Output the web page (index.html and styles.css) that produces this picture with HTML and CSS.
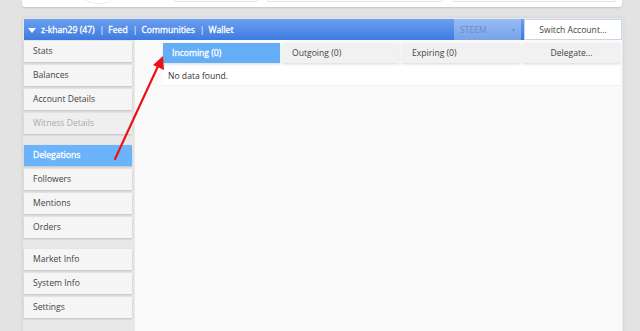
FILE: index.html
```html
<!DOCTYPE html>
<html lang="en">
<head>
    <meta charset="UTF-8">
    <meta name="viewport" content="width=device-width, initial-scale=1.0">
    <link rel="stylesheet" href="styles.css">
    <title>Delegations</title>
</head>
<body>
    <div class="topcard">
        <div class="avatar"></div>
        <div class="stub s1"></div>
        <div class="stub s2"></div>
        <div class="stub s3"></div>
    </div>

    <div class="panel">
        <div class="head">
            <div class="nav">
                <span class="caret"></span>
                <span>z-khan29 (47)</span><span class="sep">|</span>
                <span>Feed</span><span class="sep">|</span>
                <span>Communities</span><span class="sep">|</span>
                <span>Wallet</span>
            </div>
            <div class="chain">STEEM <span class="dot">&#9662;</span></div>
            <button class="switch">Switch Account...</button>
        </div>

        <div class="main">
            <ul class="menu">
                <li>Stats</li>
                <li>Balances</li>
                <li>Account Details</li>
                <li class="off">Witness Details</li>
                <li class="on gap">Delegations</li>
                <li>Followers</li>
                <li>Mentions</li>
                <li>Orders</li>
                <li class="gap">Market Info</li>
                <li>System Info</li>
                <li>Settings</li>
            </ul>
            <div class="content">
                <div class="tabs">
                    <div class="tab on t1">Incoming (0)</div>
                    <div class="tab t2">Outgoing (0)</div>
                    <div class="tab t3">Expiring (0)</div>
                    <div class="tab t4">Delegate...</div>
                </div>
                <div class="empty">No data found.</div>
            </div>
        </div>
    </div>

    <svg class="arrow" width="640" height="331" viewBox="0 0 640 331">
        <line x1="115" y1="159" x2="159" y2="64" stroke="#e8141b" stroke-width="2.2" stroke-linecap="round"/>
        <polygon points="163,56 164,70 153,65" fill="#e8141b"/>
    </svg>
</body>
</html>
```

FILE: styles.css
```css
*{box-sizing:border-box;}
body{margin:0;background:#e3e3e3;font-family:'Open Sans','DejaVu Sans',sans-serif;font-size:8.6px;color:#444;position:relative;height:331px;overflow:hidden;}

.topcard{margin-left:22px;width:600px;height:7px;background:#fff;border-radius:0 0 3px 3px;box-shadow:0 1px 2px rgba(0,0,0,.15);position:relative;overflow:hidden;}
.avatar{position:absolute;left:47px;top:-56px;width:60px;height:60px;border-radius:50%;border:1px solid #ececec;}
.stub{position:absolute;top:-4px;height:6px;border:1px solid #e4e4e4;border-radius:2px;}
.s1{left:151px;width:85px;}
.s2{left:245px;width:176px;}
.s3{left:430px;width:164px;}

.panel{margin:10px 0 0 22px;width:602px;height:330px;border:1px solid #d6dbe2;border-radius:3px;padding:1px;background:#e8e8e8;box-shadow:0 0 2px rgba(0,0,0,.08);}

.head{display:flex;align-items:stretch;height:21px;background:linear-gradient(#6b9ff0,#3e7be0);color:#fff;}
.nav{flex:1;display:flex;align-items:center;padding-left:4px;white-space:nowrap;overflow:hidden;-webkit-text-stroke:0.3px #fff;}
.caret{width:0;height:0;border-left:4px solid transparent;border-right:4px solid transparent;border-top:5px solid #fff;margin-right:5px;margin-top:1px;}
.sep{margin:0 4px 0 5px;-webkit-text-stroke:0;}
.chain{flex-shrink:0;width:67px;background:rgba(255,255,255,.3);color:#6a8cc8;display:flex;align-items:center;padding-left:6px;position:relative;}
.dot{position:absolute;right:6px;font-size:6px;color:#6a8cc8;}
.switch{flex-shrink:0;width:98px;margin-left:3px;border:1px solid #c9d6ea;background:#fff;font:inherit;color:#444;padding:0;}

.main{display:flex;height:300px;}
.menu{list-style:none;margin:0;padding:1px 3px 0 0;width:111px;flex-shrink:0;}
.menu li{height:21px;line-height:21px;padding-left:9px;margin-bottom:3px;background:#f5f5f5;box-shadow:0 1px 2px rgba(0,0,0,.18);}
.menu li.gap{margin-top:11px;}
.menu li.off{color:#aaa;background:#efefef;}
.menu li.on{background:#6bb3fb;color:#fff;-webkit-text-stroke:0.3px #fff;}

.content{flex:1;background:#fafafa;padding:3px 2px 0 28px;}
.tabs{display:flex;gap:3px;}
.tab{height:20px;line-height:20px;padding-left:9px;background:#f1f1f1;box-shadow:0 1px 2px rgba(0,0,0,.12);}
.tab.on{background:#64aef8;color:#fff;-webkit-text-stroke:0.3px #fff;}
.t1{width:117px;}
.t2{width:116px;}
.t3{width:118px;padding-left:10px;}
.t4{flex:1;padding-left:0;text-align:center;}
.empty{margin-top:3px;height:20px;line-height:20px;padding-left:5px;background:#fff;border-bottom:1px solid #f0f0f0;color:#333;}

.arrow{position:absolute;left:0;top:0;pointer-events:none;}
```
